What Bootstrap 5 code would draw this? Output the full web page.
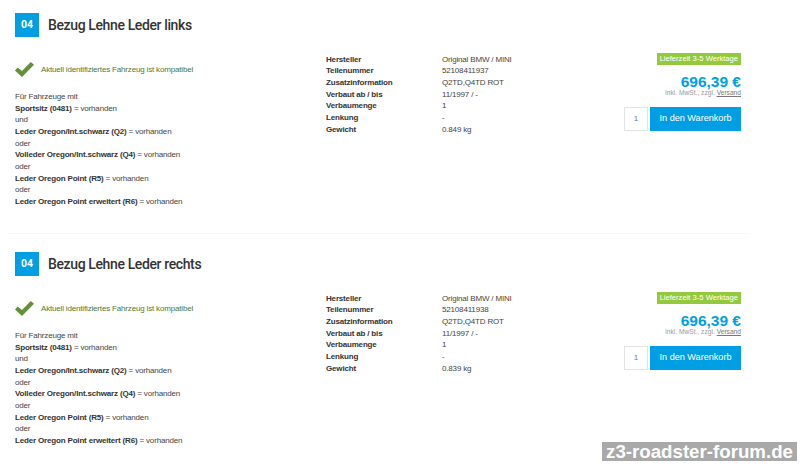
<!DOCTYPE html>
<html lang="de">
<head>
    <meta charset="UTF-8">
    <meta name="viewport" content="width=device-width, initial-scale=1.0">
    <title>Bezug Lehne Leder</title>
    <link href="https://cdn.jsdelivr.net/npm/bootstrap@5.3.3/dist/css/bootstrap.min.css" rel="stylesheet">
    <style>
        html, body {
            height: 466px;
            overflow: hidden;
        }
        body {
            background: #fff;
            color: #444;
            font-family: "Liberation Sans", Arial, sans-serif;
            font-size: 8px;
            letter-spacing: -0.17px;
            line-height: 11.67px;
            position: relative;
        }
        .part-list {
            padding: 13px 59px 0 15px;
        }
        .part-item {
            height: 239px;
        }
        .part-item:last-child {
            height: auto;
        }
        .part-head {
            height: 24px;
            margin-bottom: 13px;
        }
        .part-no {
            width: 24px;
            height: 24px;
            background: #009fe3;
            color: #fff;
            font-family: Roboto, sans-serif;
            font-weight: 700;
            font-size: 10.5px;
            letter-spacing: 0;
        }
        .part-title {
            margin: 0 0 0 9px;
            font-family: Roboto, sans-serif;
            font-weight: 500;
            font-size: 14px;
            letter-spacing: -0.38px;
            line-height: 24px;
            color: #333;
        }
        .col-fit {
            width: 311px;
            padding-top: 11px;
        }
        .col-data {
            width: 270px;
        }
        .col-buy {
            width: 145px;
        }
        .fit-ok {
            height: 17px;
            margin-bottom: 13px;
            color: #4a7a35;
        }
        .fit-ok svg {
            margin-right: 7px;
        }
        .fit-rules b, .data-grid b {
            color: #333;
        }
        .data-grid {
            display: grid;
            grid-template-columns: 116px 1fr;
            margin-top: 3.5px;
        }
        .lead-time {
            background: #95c93d;
            color: #fff;
            padding: 0 3px;
            font-size: 7.6px;
            letter-spacing: 0;
            line-height: 12px;
            margin-top: 3px;
        }
        .price-now {
            color: #009fe3;
            font-weight: 700;
            font-size: 15.5px;
            letter-spacing: 0;
            line-height: 13px;
            margin-top: 10px;
        }
        .price-note {
            color: #999;
            font-size: 6.65px;
            letter-spacing: 0;
            line-height: 9px;
        }
        .price-note a {
            color: #777;
        }
        .buy-row {
            margin-top: 10px;
        }
        .qty-box {
            width: 24px;
            height: 24px;
            margin-right: 2px;
            border: 1px solid #e3e3e3;
            color: #777;
        }
        .buy-btn {
            width: 91px;
            height: 24px;
            padding: 0;
            border: 0;
            border-radius: 0;
            background: #009fe3;
            color: #fff;
            font-size: 9.1px;
            letter-spacing: 0;
        }
        .part-sep {
            position: absolute;
            left: 8px;
            width: 740px;
            top: 233px;
            border-top: 1px solid #f7f7f7;
        }
        .forum-mark {
            position: absolute;
            left: 602px;
            top: 442px;
            width: 195px;
            height: 19px;
            background: #a9a9a9;
            color: #fff;
            font-family: "Liberation Sans", Arial, sans-serif;
            font-weight: 700;
            font-size: 18.7px;
            letter-spacing: 0;
            line-height: 19px;
            text-align: center;
            white-space: nowrap;
        }
    </style>
</head>
<body>
    <div class="part-list" id="list"></div>
    <div class="part-sep"></div>
    <div class="forum-mark">z3-roadster-forum.de</div>

    <script src="https://cdn.jsdelivr.net/npm/bootstrap@5.3.3/dist/js/bootstrap.bundle.min.js"></script>
    <script>
        const parts = [
            { title: 'Bezug Lehne Leder links', nr: '52108411937', weight: '0.849 kg' },
            { title: 'Bezug Lehne Leder rechts', nr: '52108411938', weight: '0.839 kg' }
        ];
        const check = '<svg width="19" height="15" viewBox="0 0 19 15"><path fill="#629136" d="M0 8.5 2.6 5.6 7 9 15.8 0 19 2.8 7 15z"/></svg>';

        document.getElementById('list').innerHTML = parts.map(p => `
            <div class="part-item">
                <div class="part-head d-flex align-items-center">
                    <div class="part-no d-flex align-items-center justify-content-center">04</div>
                    <h2 class="part-title">${p.title}</h2>
                </div>
                <div class="d-flex">
                    <div class="col-fit">
                        <div class="fit-ok d-flex align-items-center">${check}<span>Aktuell identifiziertes Fahrzeug ist kompatibel</span></div>
                        <div class="fit-rules">
                            <div>Für Fahrzeuge mit</div>
                            <div><b>Sportsitz (0481)</b> = vorhanden</div>
                            <div>und</div>
                            <div><b>Leder Oregon/Int.schwarz (Q2)</b> = vorhanden</div>
                            <div>oder</div>
                            <div><b>Volleder Oregon/Int.schwarz (Q4)</b> = vorhanden</div>
                            <div>oder</div>
                            <div><b>Leder Oregon Point (R5)</b> = vorhanden</div>
                            <div>oder</div>
                            <div><b>Leder Oregon Point erweitert (R6)</b> = vorhanden</div>
                        </div>
                    </div>
                    <div class="col-data">
                        <div class="data-grid">
                            <b>Hersteller</b><span>Original BMW / MINI</span>
                            <b>Teilenummer</b><span>${p.nr}</span>
                            <b>Zusatzinformation</b><span>Q2TD,Q4TD ROT</span>
                            <b>Verbaut ab / bis</b><span>11/1997 / -</span>
                            <b>Verbaumenge</b><span>1</span>
                            <b>Lenkung</b><span>-</span>
                            <b>Gewicht</b><span>${p.weight}</span>
                        </div>
                    </div>
                    <div class="col-buy d-flex flex-column align-items-end">
                        <div class="lead-time">Lieferzeit 3-5 Werktage</div>
                        <div class="price-now">696,39 €</div>
                        <div class="price-note">inkl. MwSt., zzgl. <a href="#">Versand</a></div>
                        <div class="buy-row d-flex">
                            <div class="qty-box d-flex align-items-center justify-content-center">1</div>
                            <button type="button" class="btn buy-btn">In den Warenkorb</button>
                        </div>
                    </div>
                </div>
            </div>`).join('');
    </script>
</body>
</html>
